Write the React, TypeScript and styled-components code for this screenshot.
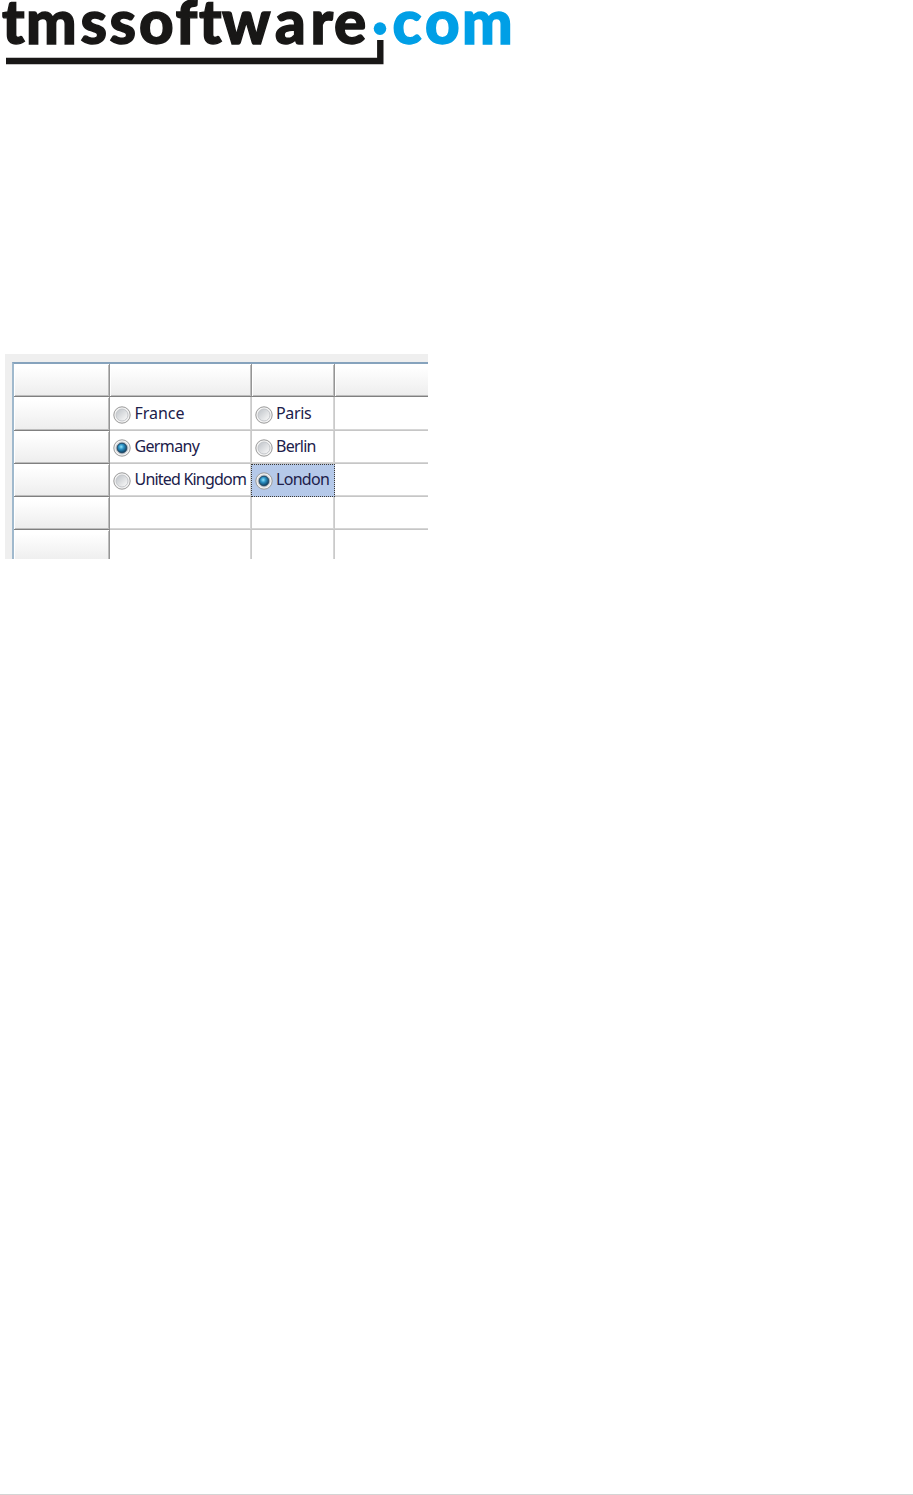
import styled, { createGlobalStyle } from "styled-components";

type Option = {
  label: string;
  tracking: number;
  checked?: boolean;
  focused?: boolean;
};

const rows: { country?: Option; city?: Option }[] = [
  {
    country: { label: "France", tracking: -0.05 },
    city: { label: "Paris", tracking: -0.35 },
  },
  {
    country: { label: "Germany", tracking: -0.65, checked: true },
    city: { label: "Berlin", tracking: -0.75 },
  },
  {
    country: { label: "United Kingdom", tracking: -0.8 },
    city: { label: "London", tracking: -0.7, checked: true, focused: true },
  },
  {},
  {},
];

const Logo = () => (
  <LogoSvg viewBox="0 0 520 70" aria-label="tmssoftware.com">
    <LogoText
      y="43.6"
      x="2 26 80.5 109.5 139 175.5 199 222 275 310.5 334"
      fill="#181716"
      stroke="#181716"
    >
      tmssoftware
    </LogoText>
    <LogoText y="43.6" x="392.5 425 462" fill="#009fe6" stroke="#009fe6">
      com
    </LogoText>
    <path d="M6 61H380.3V40" fill="none" stroke="#181716" strokeWidth="6.4" />
    <circle cx="380" cy="28.6" r="6.3" fill="#009fe6" />
  </LogoSvg>
);

const Radio = ({ checked }: { checked?: boolean }) => (
  <RadioSvg viewBox="0 0 18 18">
    <defs>
      <linearGradient id="well" x1="0" y1="0" x2="1" y2="1">
        <stop offset="0.1" stopColor="#c3c7cc" />
        <stop offset="0.9" stopColor="#f7f7f7" />
      </linearGradient>
      <radialGradient id="bead" cx="0.42" cy="0.38" r="0.65">
        <stop offset="0" stopColor="#8fe4fb" />
        <stop offset="0.4" stopColor="#2c91c4" />
        <stop offset="1" stopColor="#0c3655" />
      </radialGradient>
    </defs>
    <circle cx="9" cy="9" r="8.2" fill="#f4f4f4" stroke="#999" />
    <circle cx="9" cy="9" r="6" fill="url(#well)" stroke="#c3c6ca" />
    {checked && (
      <circle cx="9" cy="9" r="4.9" fill="url(#bead)" stroke="#254a66" />
    )}
  </RadioSvg>
);

const OptionCell = ({ option, city }: { option?: Option; city?: boolean }) => (
  <Cell $focused={option?.focused} $inset={city ? 2.5 : 3}>
    {option && (
      <>
        <Radio checked={option.checked} />
        <Label $tracking={option.tracking}>{option.label}</Label>
      </>
    )}
  </Cell>
);

const App = () => {
  return (
    <Page>
      <GlobalStyle />
      <Logo />
      <GridPanel>
        <Grid>
          <FixedCell />
          <FixedCell />
          <FixedCell />
          <FixedCell $last />
          {rows.map((row, i) => (
            <Row key={i}>
              <FixedCell />
              <OptionCell option={row.country} />
              <OptionCell option={row.city} city />
              <Cell $last />
            </Row>
          ))}
        </Grid>
      </GridPanel>
      <Footer />
    </Page>
  );
};

export default App;

const GlobalStyle = createGlobalStyle`
  body {
    margin: 0;
    background: #fff;
  }
  * {
    box-sizing: border-box;
  }
`;

const Page = styled.div`
  display: flex;
  flex-direction: column;
  align-items: flex-start;
  width: 913px;
  height: 1495px;
`;

const LogoSvg = styled.svg`
  display: block;
  width: 520px;
  height: 70px;
  overflow: visible;
`;

const LogoText = styled.text`
  font-family: Lato, "Open Sans", sans-serif;
  font-size: 60px;
  font-weight: 900;
  stroke-width: 1.4px;
`;

const GridPanel = styled.div`
  width: 423px;
  height: 205px;
  margin: 284px 0 0 5px;
  padding: 8px 0 0 7px;
  background: #efefef;
  overflow: hidden;
`;

const Grid = styled.div`
  display: grid;
  grid-template-columns: 96px 142px 83px 93px;
  grid-template-rows: 33px 34px 33px 33px 33px 33px;
  width: 416px;
  border-top: 2px solid #86a3bd;
  border-left: 2px solid #a0b9cd;
  background: #fff;
`;

const Row = styled.div`
  display: contents;
`;

const FixedCell = styled.div<{ $last?: boolean }>`
  border-right: ${(props) => (props.$last ? "none" : "1px solid #959595")};
  border-bottom: 1px solid #808080;
  background: linear-gradient(#fff 10%, #ededed);
  box-shadow:
    inset 1px 1px #fff,
    inset ${(props) => (props.$last ? "0" : "-1px")} -1px #bdbdbd;
`;

const Cell = styled.div<{
  $focused?: boolean;
  $last?: boolean;
  $inset?: number;
}>`
  display: flex;
  align-items: center;
  min-width: 0;
  padding-left: ${(props) => props.$inset ?? 0}px;
  border-right: ${(props) => (props.$last ? "none" : "1px solid #cacaca")};
  border-bottom: 1px solid #c6c6c6;
  box-shadow: inset ${(props) => (props.$last ? "0" : "-1px")} -1px #d6d6d6;
  ${(props) =>
    props.$focused &&
    `
    margin-left: -1px;
    padding: 0 0 1px 2.5px;
    border: 1px dotted #3d3a35;
    background: #b5c9e9;
    box-shadow: none;
  `}
`;

const RadioSvg = styled.svg`
  flex: none;
  width: 18px;
  height: 18px;
  margin: 2px 3.5px 0 0;
`;

const Label = styled.span<{ $tracking: number }>`
  margin-bottom: 2px;
  font-family: "Noto Sans", "Open Sans", sans-serif;
  font-size: 16px;
  line-height: 20px;
  letter-spacing: ${(props) => props.$tracking}px;
  white-space: nowrap;
  color: #20204a;
`;

const Footer = styled.footer`
  width: 100%;
  height: 1px;
  margin-top: auto;
  background: #d4d4d4;
`;
